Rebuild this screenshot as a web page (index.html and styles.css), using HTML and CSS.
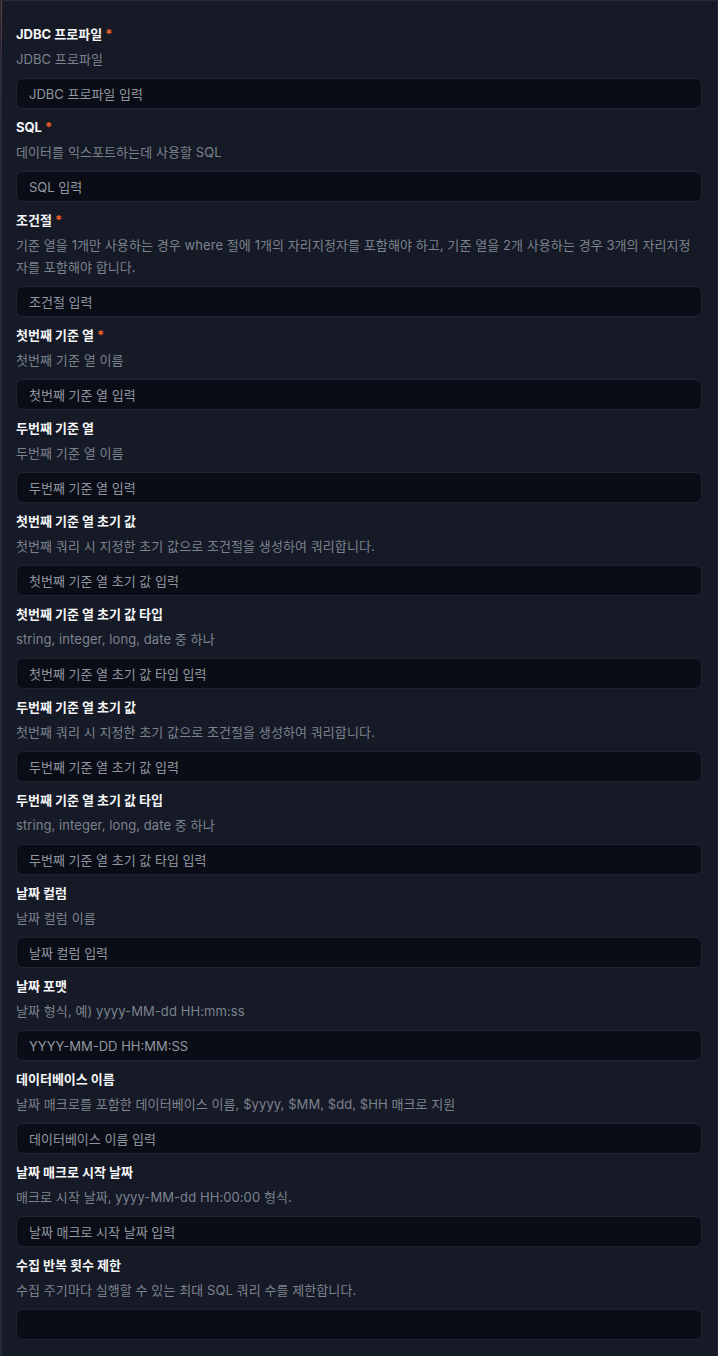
FILE: index.html
```html
<!DOCTYPE html>
<html lang="ko">
<head>
    <meta charset="UTF-8">
    <meta name="viewport" content="width=device-width, initial-scale=1.0">
    <title>JDBC 설정</title>
    <link rel="stylesheet" href="styles.css">
</head>
<body>
    <div class="panel">
        <div class="field">
            <label>JDBC 프로파일<span class="req">*</span></label>
            <p class="desc">JDBC 프로파일</p>
            <input type="text" placeholder="JDBC 프로파일 입력">
        </div>
        <div class="field">
            <label>SQL<span class="req">*</span></label>
            <p class="desc">데이터를 익스포트하는데 사용할 SQL</p>
            <input type="text" placeholder="SQL 입력">
        </div>
        <div class="field">
            <label>조건절<span class="req">*</span></label>
            <p class="desc">기준 열을 1개만 사용하는 경우 where 절에 1개의 자리지정자를 포함해야 하고, 기준 열을 2개 사용하는 경우 3개의 자리지정자를 포함해야 합니다.</p>
            <input type="text" placeholder="조건절 입력">
        </div>
        <div class="field">
            <label>첫번째 기준 열<span class="req">*</span></label>
            <p class="desc">첫번째 기준 열 이름</p>
            <input type="text" placeholder="첫번째 기준 열 입력">
        </div>
        <div class="field">
            <label>두번째 기준 열</label>
            <p class="desc">두번째 기준 열 이름</p>
            <input type="text" placeholder="두번째 기준 열 입력">
        </div>
        <div class="field">
            <label>첫번째 기준 열 초기 값</label>
            <p class="desc">첫번째 쿼리 시 지정한 초기 값으로 조건절을 생성하여 쿼리합니다.</p>
            <input type="text" placeholder="첫번째 기준 열 초기 값 입력">
        </div>
        <div class="field">
            <label>첫번째 기준 열 초기 값 타입</label>
            <p class="desc">string, integer, long, date 중 하나</p>
            <input type="text" placeholder="첫번째 기준 열 초기 값 타입 입력">
        </div>
        <div class="field">
            <label>두번째 기준 열 초기 값</label>
            <p class="desc">첫번째 쿼리 시 지정한 초기 값으로 조건절을 생성하여 쿼리합니다.</p>
            <input type="text" placeholder="두번째 기준 열 초기 값 입력">
        </div>
        <div class="field">
            <label>두번째 기준 열 초기 값 타입</label>
            <p class="desc">string, integer, long, date 중 하나</p>
            <input type="text" placeholder="두번째 기준 열 초기 값 타입 입력">
        </div>
        <div class="field">
            <label>날짜 컬럼</label>
            <p class="desc">날짜 컬럼 이름</p>
            <input type="text" placeholder="날짜 컬럼 입력">
        </div>
        <div class="field">
            <label>날짜 포맷</label>
            <p class="desc">날짜 형식, 예) yyyy-MM-dd HH:mm:ss</p>
            <input type="text" placeholder="YYYY-MM-DD HH:MM:SS">
        </div>
        <div class="field">
            <label>데이터베이스 이름</label>
            <p class="desc">날짜 매크로를 포함한 데이터베이스 이름, $yyyy, $MM, $dd, $HH 매크로 지원</p>
            <input type="text" placeholder="데이터베이스 이름 입력">
        </div>
        <div class="field">
            <label>날짜 매크로 시작 날짜</label>
            <p class="desc">매크로 시작 날짜, yyyy-MM-dd HH:00:00 형식.</p>
            <input type="text" placeholder="날짜 매크로 시작 날짜 입력">
        </div>
        <div class="field">
            <label>수집 반복 횟수 제한</label>
            <p class="desc">수집 주기마다 실행할 수 있는 최대 SQL 쿼리 수를 제한합니다.</p>
            <input type="text">
        </div>
    </div>
</body>
</html>
```

FILE: styles.css
```css
html,
body{
    margin: 0;
    padding: 0;
    background-color: #151a26;
}
body{
    font-family: Inter, "Noto Sans CJK KR", sans-serif;
    font-size: 13px;
    color: #f3f4f6;
}
.panel{
    min-height: 1356px;
    box-sizing: border-box;
    padding: 23px 15px 20px 15px;
    border: 1px solid #232a3b;
    border-bottom: none;
    background: linear-gradient(to bottom, #6e3a34 0, #3a2c36 60px, #232a3b 130px) left top / 1px 100% no-repeat, #151a26;
    display: flex;
    flex-direction: column;
    gap: 8px;
}
.field{
    display: flex;
    flex-direction: column;
}
.field label{
    font-weight: 700;
    line-height: 20px;
    color: #f5f6f8;
}
.req{
    color: #f2602a;
    margin-left: 3px;
}
.desc{
    margin: 4px 0 0 0;
    line-height: 22px;
    letter-spacing: 0.08px;
    color: #7c828e;
}
.field input{
    margin-top: 8px;
    height: 31px;
    box-sizing: border-box;
    width: 100%;
    padding: 0 12px;
    border: 1px solid #1d2435;
    border-radius: 7px;
    background-color: #0a0d15;
    color: #e5e7eb;
    font-family: Inter, "Noto Sans CJK KR", sans-serif;
    font-size: 13px;
    outline: none;
}
.field input::placeholder{
    color: #9197a1;
}
```
